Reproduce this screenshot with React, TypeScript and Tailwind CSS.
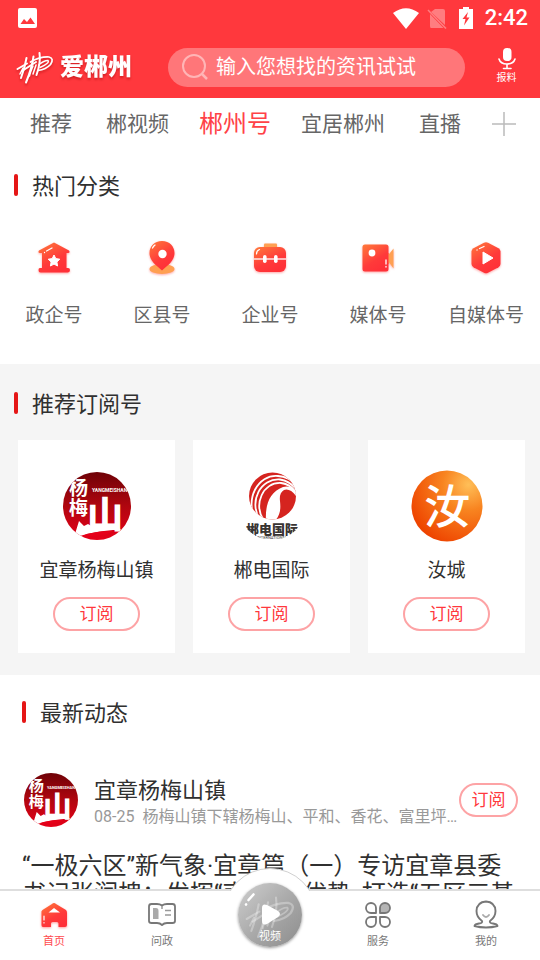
import { useId, useState, type ReactNode } from 'react'

type Tab = { id: string; label: string }

type Category = { label: string; icon: ReactNode }

type Account = { name: string; logo: ReactNode }

type SectionTitleProps = { children: string }

function BrandMark({ className, thin = false }: { className: string; thin?: boolean }) {
  return (
    <svg viewBox="0 0 38 33" className={className} fill="none" stroke="currentColor" strokeWidth={thin ? 1.6 : 2} strokeLinecap="round" aria-hidden="true">
      <path d="M1.5 18 L11 12.500" />
      <path d="M10.500 7 Q9 16 5 27" />
      <path d="M7 17 L4 23" strokeWidth="1.500" />
      <path d="M6 20 L20 11" />
      <path d="M17.500 5.500 Q16 17 10 31.500" />
      <path d="M17 15 Q14 22 13.500 25" strokeWidth="1.500" />
      <path d="M20 14 L17 23" strokeWidth="1.500" />
      <path d="M23.500 2 Q25 11 20.500 24" />
      <path d="M14.500 11 Q24 5.500 33 6 Q38.500 7.500 34.500 13.500 Q30 18.500 22 19.500" strokeWidth="1.700" />
      <path d="M23 13.500 Q29 9 32 9.500 Q34 12 24 16.500" strokeWidth="1.400" />
    </svg>
  )
}

function StatusIcons() {
  return (
    <div className="flex items-center">
      <svg viewBox="0 0 26 21" className="mr-2 h-[21px] w-[26px]" fill="currentColor" aria-hidden="true">
        <path d="M0 5 Q13 -4.500 26 5 L13 21 Z" />
      </svg>
      <svg viewBox="0 0 20 21" className="mr-3 h-[21px] w-5" aria-hidden="true">
        <path d="M8 1 H16 Q18 1 18 3 V17 L4 4 Z M3 6 L16.500 20 H4 Q3 20 3 18 Z" fill="#ff7d80" />
        <path d="M1 2 L19 20.500" stroke="#ff7d80" strokeWidth="1.500" />
      </svg>
      <svg viewBox="0 0 14 22" className="mr-3 h-[22px] w-3.5" aria-hidden="true">
        <path d="M4 0 H10 V2 H14 V22 H0 V2 H4 Z" fill="currentColor" />
        <path d="M9 5 L3.500 12 H6.500 L5 18.500 L10.500 10.500 H7.500 Z" fill="#ff383d" />
      </svg>
      <span className="text-[22px] leading-7 font-medium">2:42</span>
    </div>
  )
}

function WarmGradient({ id }: { id: string }) {
  return (
    <linearGradient id={id} x1="0" y1="0" x2="0.6" y2="1">
      <stop offset="0" stopColor="#ff7a3a" />
      <stop offset="0.65" stopColor="#ff3a3a" />
      <stop offset="1" stopColor="#ff3038" />
    </linearGradient>
  )
}

function CategoryIcon({ children }: { children: (fill: string) => ReactNode }) {
  const id = useId()

  return (
    <svg viewBox="0 0 40 40" className="size-10 drop-shadow-[0_1px_1px_rgba(255,60,60,0.45)]" aria-hidden="true">
      <defs>
        <WarmGradient id={id} />
      </defs>
      {children(`url(#${id})`)}
    </svg>
  )
}

const houseIcon = (
  <CategoryIcon>
    {(fill) => (
      <>
        <path d="M20 4.500 L35 12.500 Q36.500 15 34 15 H32.500 V30 H34 Q36 30 36 32 T34 34.500 H6.500 Q4.500 34.500 4.500 32 T6.500 30 H8 V15 H6 Q3.500 15 5 12.500 Z" fill={fill} />
        <path d="M20 17 L21.800 20.600 L25.800 21.200 L22.900 24 L23.600 28 L20 26.100 L16.400 28 L17.100 24 L14.200 21.200 L18.200 20.600 Z" fill="#fff" stroke="#fff" strokeLinejoin="round" />
        <path d="M12.500 13 L18 10 M10.500 14.500 L10.600 14.400" stroke="#fff" strokeWidth="1.300" strokeLinecap="round" />
      </>
    )}
  </CategoryIcon>
)

const pinIcon = (
  <CategoryIcon>
    {(fill) => (
      <>
        <ellipse cx="20" cy="31" rx="12.500" ry="5" fill="#ffa052" />
        <path d="M20 3 C12.500 3 7.500 8.500 7.500 15 C7.500 23 14 27 20 32.500 C26 27 32.500 23 32.500 15 C32.500 8.500 27.500 3 20 3 Z" fill={fill} />
        <circle cx="20.500" cy="16" r="4.200" fill="#fff" />
        <path d="M10.500 10 Q11.500 8 13 7" stroke="#fff" strokeWidth="1.300" fill="none" strokeLinecap="round" />
      </>
    )}
  </CategoryIcon>
)

const briefcaseIcon = (
  <CategoryIcon>
    {(fill) => (
      <>
        <rect x="14" y="5.500" width="13" height="6" rx="1" fill="#ffa052" />
        <rect x="4" y="9" width="32" height="25" rx="6" fill={fill} />
        <path d="M4 21 H36" stroke="#fff" strokeWidth="1.300" />
        <rect x="13" y="17" width="3.600" height="8" rx="1.800" fill="#fff" />
        <rect x="24" y="17" width="3.600" height="8" rx="1.800" fill="#fff" />
        <path d="M6.500 16 Q6.500 12.500 9.500 11.500" stroke="#fff" strokeWidth="1.200" fill="none" strokeLinecap="round" />
      </>
    )}
  </CategoryIcon>
)

const cameraIcon = (
  <CategoryIcon>
    {(fill) => (
      <>
        <path d="M28 20 L35.500 10.500 V30.500 Z M28 15 H31 V26 H28 Z" fill="#ffa052" />
        <rect x="4.500" y="6.500" width="26" height="27" rx="2.500" fill={fill} />
        <circle cx="14" cy="15" r="3.400" fill="#fff" />
        <path d="M28 22 V26 M28 28.500 V29" stroke="#fff" strokeWidth="1.300" strokeLinecap="round" />
      </>
    )}
  </CategoryIcon>
)

const playIcon = (
  <CategoryIcon>
    {(fill) => (
      <>
        <path d="M18 4.800 Q20 3.800 22 4.800 L32.500 10.300 Q34.500 11.500 34.500 13.500 V26 Q34.500 28 32.500 29.200 L22 34.800 Q20 35.800 18 34.800 L7.500 29.200 Q5.500 28 5.500 26 V13.500 Q5.500 11.500 7.500 10.300 Z" fill={fill} />
        <path d="M17 14 V26 L27 20 Z" fill="#fff" stroke="#fff" strokeWidth="1" strokeLinejoin="round" />
        <path d="M13.500 10.500 L18 8.500 M11 12 L11.100 11.900" stroke="#fff" strokeWidth="1.300" strokeLinecap="round" />
      </>
    )}
  </CategoryIcon>
)

function YangmeiLogo({ className }: { className: string }) {
  const id = useId()

  return (
    <svg viewBox="0 0 68 68" className={className} role="img" aria-label="宜章杨梅山镇">
      <defs>
        <linearGradient id={id} x1="0" y1="0" x2="0" y2="1">
          <stop offset="0" stopColor="#6f0207" />
          <stop offset="0.5" stopColor="#b0060f" />
          <stop offset="1" stopColor="#e60019" />
        </linearGradient>
        <clipPath id={`${id}-clip`}>
          <circle cx="34" cy="34" r="34" />
        </clipPath>
      </defs>
      <g clipPath={`url(#${id}-clip)`}>
        <rect width="68" height="68" fill={`url(#${id})`} />
        <g fill="#fff" fontFamily="'Noto Sans CJK SC', sans-serif" fontWeight="700">
          <text x="6" y="23" fontSize="19">杨</text>
          <text x="6" y="43" fontSize="19">梅</text>
          <text x="24" y="56" fontSize="36" fontWeight="900">山</text>
          <text x="29" y="20" fontSize="5" fontFamily="Roboto, sans-serif">YANGMEISHAN</text>
        </g>
        <path d="M12 62 L16 49 L21 54 L25 52 L30 55 L54 54 L58 58 L50 58 Q36 59 24 62 L17 65 Z" fill="#fff" />
        <path d="M17 64 Q32 59 50 59 Q46 63 32 64 Z" fill="#e60019" />
      </g>
    </svg>
  )
}

function ChendianLogo() {
  const id = useId()

  return (
    <svg viewBox="0 0 68 68" className="size-[68px]" role="img" aria-label="郴电国际">
      <defs>
        <clipPath id={id}>
          <circle cx="34" cy="34" r="34" />
        </clipPath>
        <clipPath id={`${id}-ball`}>
          <circle cx="34.500" cy="24" r="23.500" />
        </clipPath>
      </defs>
      <g clipPath={`url(#${id}-ball)`}>
        <rect width="68" height="52" fill="#d5241f" />
        <g fill="none" stroke="#fff" strokeWidth="1.800">
          <path d="M18 48 C6 28 20 2 40 4 Q52 5 60 14" />
          <path d="M22 48 C10 29 23 6 42 7.500 Q52 9 60 19" />
          <path d="M26 49 C15 32 25 10 43 11 Q53 12 60 23" />
        </g>
        <path d="M28 49 C27 34 31 20 45 15 Q53 13 58 20 L58 24 Q52 16 46 18 Q41 21 42 29 C43 38 42 43 37 49 Z" fill="#fff" />
        <path d="M60 40 Q52 48 37 47 L37 50 H60 Z" fill="#fff" />
      </g>
      <g clipPath={`url(#${id})`} fill="#383432">
        <text x="34" y="62" fontSize="13" fontWeight="900" textAnchor="middle" fontFamily="'Noto Sans CJK SC', sans-serif">郴电国际</text>
        <text x="34" y="67" fontSize="4" textAnchor="middle" fontFamily="Roboto, sans-serif">INTERNATIONAL</text>
      </g>
    </svg>
  )
}

function RuchengLogo() {
  const id = useId()

  return (
    <svg viewBox="0 0 72 72" className="size-[72px]" role="img" aria-label="汝城">
      <defs>
        <radialGradient id={id} cx="0.8" cy="0.2" r="0.9">
          <stop offset="0" stopColor="#ffbf58" />
          <stop offset="0.4" stopColor="#f88420" />
          <stop offset="1" stopColor="#ee4400" />
        </radialGradient>
      </defs>
      <circle cx="36" cy="36" r="35.500" fill={`url(#${id})`} />
      <text x="36" y="53" fontSize="46" fontWeight="500" textAnchor="middle" fill="#fff" fontFamily="'Noto Sans CJK SC', sans-serif">汝</text>
    </svg>
  )
}

function HomeIcon() {
  const id = useId()

  return (
    <svg viewBox="0 0 32 32" className="size-8 drop-shadow-[0_1px_1px_rgba(255,60,60,0.5)]" aria-hidden="true">
      <defs>
        <WarmGradient id={id} />
      </defs>
      <path d="M16 4 Q17 4 18 5 L28 11 Q29 12 29 14 V26 Q29 28 27 28 H20.500 V24.500 Q20.500 23 19 23 H14.500 Q13 23 13 24.500 V28 H5 Q3.500 28 3.500 26 V14 Q3 12 4.500 11 L14 5 Q15 4 16 4 Z" fill={`url(#${id})`} />
      <path d="M16 9 L22 13.500 H10.500 Z" fill="#fff" />
      <path d="M6 17 V21 M6 23.500 V24" stroke="#fff" strokeWidth="1.200" strokeLinecap="round" />
    </svg>
  )
}

function BookIcon() {
  return (
    <svg viewBox="0 0 32 32" className="size-8" fill="none" stroke="#777" strokeWidth="1.800" strokeLinejoin="round" aria-hidden="true">
      <path d="M16 6.500 Q14 5 11 5 H5.500 Q3 5 3 7.500 V22 Q3 24 5.500 24 H11 Q14 24 16 26 Q18 24 21 24 H26.500 Q29 24 29 22 V7.500 Q29 5 26.500 5 H21 Q18 5 16 6.500 Z" />
      <path d="M7 9 H10 Q12.500 9 12.500 12 V20 H7 Z" fill="#aaa" stroke="none" />
      <path d="M16 7 V10 M19 11.500 H25 M19 16 H25" stroke="#999" strokeWidth="1.500" />
    </svg>
  )
}

function CloverIcon() {
  return (
    <svg viewBox="0 0 32 32" className="size-8" fill="none" stroke="#777" strokeWidth="1.800" strokeLinejoin="round" aria-hidden="true">
      <path d="M14 14 H9 A5 5 0 1 1 14 9 Z" />
      <path d="M18 14 V9 A5 5 0 1 1 23 14 Z" fill="#b5b5b5" />
      <path d="M14 18 V23 A5 5 0 1 1 9 18 Z" />
      <path d="M18 18 H23 A5 5 0 1 1 18 23 Z" />
    </svg>
  )
}

function PersonIcon() {
  return (
    <svg viewBox="0 0 32 32" className="size-8" fill="none" stroke="#777" strokeWidth="1.900" strokeLinejoin="round" strokeLinecap="round" aria-hidden="true">
      <path d="M12 22 Q6.500 18 6.500 12 Q7 3 16 2.500 Q25 3 25.500 12 Q25.500 18 20 22 Q19 24 23 24.500 Q27 25 27.500 27 Q22 28.500 16 28.500 Q10 28.500 4.500 27 Q5 25 9 24.500 Q13 24 12 22 Z" />
      <path d="M13 16 Q16 20 19 16" stroke="#aaa" />
    </svg>
  )
}

function SectionTitle({ children }: SectionTitleProps) {
  return (
    <h2 className="flex items-start text-[22px] leading-8 text-[#303030]">
      <span className="mt-[3px] mr-3.5 h-[22px] w-1 rounded-sm bg-[#e51616]" />
      {children}
    </h2>
  )
}

function SubscribeButton({ name, className }: { name: string; className: string }) {
  const [subscribed, setSubscribed] = useState(false)

  return (
    <button
      type="button"
      aria-label={`订阅${name}`}
      aria-pressed={subscribed}
      className={`flex h-[34px] shrink-0 items-center justify-center rounded-full border-2 border-[#fda3a5] bg-white text-[17px] leading-6 text-[#ff383d] ${className}`}
      onClick={() => setSubscribed(!subscribed)}
    >
      {subscribed ? '已订阅' : '订阅'}
    </button>
  )
}

const tabs: Tab[] = [
  { id: 'recommend', label: '推荐' },
  { id: 'video', label: '郴视频' },
  { id: 'accounts', label: '郴州号' },
  { id: 'living', label: '宜居郴州' },
  { id: 'live', label: '直播' },
]

const categories: Category[] = [
  { label: '政企号', icon: houseIcon },
  { label: '区县号', icon: pinIcon },
  { label: '企业号', icon: briefcaseIcon },
  { label: '媒体号', icon: cameraIcon },
  { label: '自媒体号', icon: playIcon },
]

const accounts: Account[] = [
  { name: '宜章杨梅山镇', logo: <YangmeiLogo className="size-[68px]" /> },
  { name: '郴电国际', logo: <ChendianLogo /> },
  { name: '汝城', logo: <RuchengLogo /> },
]

function Header() {
  return (
    <header className="shrink-0 bg-[#ff383d] text-white">
      <div className="flex h-9 items-center justify-between pr-3 pl-[18px]">
        <svg viewBox="0 0 19 20" className="h-5 w-[19px]" aria-hidden="true">
          <rect width="19" height="20" rx="2" fill="currentColor" />
          <path d="M2.500 16 L6 11 L9 14 L12.500 9.500 L17 16 Z" fill="#ff383d" />
        </svg>
        <StatusIcons />
      </div>
      <div className="flex h-[62px] items-center pl-4">
        <h1 className="flex w-[152px] shrink-0 items-center gap-1.5 text-2xl font-black drop-shadow-[0_2px_1px_rgba(150,0,0,0.4)]">
          <BrandMark className="h-[33px] w-[38px]" />
          爱郴州
        </h1>
        <label className="mr-2 flex h-[39px] min-w-0 flex-1 items-center gap-2 rounded-full bg-[#ff7679] pl-3.5">
          <svg viewBox="0 0 26 26" className="size-[26px] shrink-0" fill="none" stroke="#ffb5b6" strokeWidth="2" aria-hidden="true">
            <circle cx="12" cy="12" r="11" />
            <path d="M20 20 L25 25" strokeWidth="2.500" />
          </svg>
          <input
            type="search"
            aria-label="搜索"
            placeholder="输入您想找的资讯试试"
            className="w-full min-w-0 bg-transparent text-xl leading-7 text-white outline-none placeholder:text-white"
          />
        </label>
        <button type="button" className="flex w-[67px] shrink-0 flex-col items-center text-[10px] leading-4">
          <svg viewBox="0 0 18 22" className="h-[22px] w-[18px]" fill="none" stroke="currentColor" strokeWidth="1.600" strokeLinecap="round" aria-hidden="true">
            <rect x="5" y="0" width="8.500" height="13" rx="4" fill="currentColor" stroke="none" />
            <path d="M1 11 Q2.500 16 9 16 Q15.500 16 17 11 M9 16 V20 M5.500 20.500 H13" />
          </svg>
          报料
        </button>
      </div>
    </header>
  )
}

function ChannelTabs() {
  const [active, setActive] = useState('accounts')

  return (
    <nav className="flex h-[50px] shrink-0 items-center gap-[34px] pt-px pr-6 pl-[30px]" aria-label="频道">
      {tabs.map((tab) => (
        <button
          key={tab.id}
          type="button"
          className={tab.id === active ? '-mx-1 shrink-0 text-2xl text-[#ff4247]' : 'shrink-0 text-[21px] leading-8 text-[#666]'}
          onClick={() => setActive(tab.id)}
        >
          {tab.label}
        </button>
      ))}
      <button type="button" aria-label="更多频道" className="-ml-2 flex flex-1 justify-end">
        <svg viewBox="0 0 24 24" className="size-6 shrink-0" stroke="#bbb" strokeWidth="1.500" aria-hidden="true">
          <path d="M12 0 V24 M0 12 H24" />
        </svg>
      </button>
    </nav>
  )
}

function BottomNav() {
  return (
    <nav className="relative grid h-[71px] shrink-0 grid-cols-5 border-t-2 border-[#dedede] bg-white text-[11px] leading-4 text-[#777]" aria-label="主导航">
      {/* raised bump behind the video button */}
      <span className="absolute -top-[23px] left-1/2 h-[94px] w-[94px] -translate-x-1/2 rounded-full border border-[#d0d0d0] bg-white" />
      <span className="absolute inset-x-0 top-0 h-full bg-white" />
      <a href="#home" className="relative flex flex-col items-center pt-2 text-[#ff4b4f]">
        <HomeIcon />
        <span className="mt-[3px]">首页</span>
      </a>
      <a href="#politics" className="relative flex flex-col items-center pt-2">
        <BookIcon />
        <span className="mt-[3px]">问政</span>
      </a>
      <a href="#video" className="relative flex justify-center text-white">
        <span className="absolute -top-2 flex size-16 flex-col items-center justify-end rounded-full bg-linear-to-br from-[#cfcfcf] via-[#aaa] to-[#8c8c8c] pb-0.5 shadow-[0_1px_3px_rgba(0,0,0,0.4)]">
          <BrandMark thin className="absolute top-3 left-1.5 h-[44px] w-[52px] text-white/30" />
          <svg viewBox="0 0 64 64" className="absolute inset-0 size-16" fill="#fff" aria-hidden="true">
            <path d="M24 25 Q24 20 29 22 L40 28 Q44 31 40 34 L29 41 Q24 43 24 38 Z" />
            <path d="M10.500 17 L15.500 11.500 M8 21.500 L8.100 21.400" stroke="#fff" strokeWidth="2.600" strokeLinecap="round" />
          </svg>
          <span className="relative">视频</span>
        </span>
      </a>
      <a href="#service" className="relative flex flex-col items-center pt-2">
        <CloverIcon />
        <span className="mt-[3px]">服务</span>
      </a>
      <a href="#mine" className="relative flex flex-col items-center pt-2">
        <PersonIcon />
        <span className="mt-[3px]">我的</span>
      </a>
    </nav>
  )
}

export default function App() {
  return (
    <div className="flex h-dvh flex-col overflow-hidden bg-white font-[Roboto,'Noto_Sans_CJK_SC',sans-serif]" lang="zh-CN">
      <Header />
      <ChannelTabs />
      <main className="min-h-0 flex-1 overflow-y-auto [scrollbar-width:none]">
        <section className="pt-[23px] pb-[34px]">
          <div className="pl-3.5">
            <SectionTitle>热门分类</SectionTitle>
          </div>
          <div className="mt-[35px] grid grid-cols-5">
            {categories.map((category) => (
              <a key={category.label} href="#category" className="flex flex-col items-center text-[19px] leading-7 text-[#666]">
                {category.icon}
                <span className="mt-6 whitespace-nowrap">{category.label}</span>
              </a>
            ))}
          </div>
        </section>

        <section className="bg-[#f5f5f5] pt-[25px] pb-[22px]">
          <div className="pl-3.5">
            <SectionTitle>推荐订阅号</SectionTitle>
          </div>
          <div className="mt-[19px] grid grid-cols-3 gap-[18px] pr-[15px] pl-[18px]">
            {accounts.map((account) => (
              <article key={account.name} className="flex flex-col items-center bg-white pt-[30px] pb-[22px]">
                <div className="flex size-[72px] items-center justify-center">{account.logo}</div>
                <h3 className="mt-[15px] mb-3 text-[19px] leading-7 whitespace-nowrap text-[#303030]">{account.name}</h3>
                <SubscribeButton name={account.name} className="w-[87px]" />
              </article>
            ))}
          </div>
        </section>

        <section className="px-[22px] pt-[23px] pb-6">
          <SectionTitle>最新动态</SectionTitle>
          <article className="mt-[43px]">
            <div className="flex items-center">
              <YangmeiLogo className="mr-4 ml-0.5 size-[54px] shrink-0" />
              <div className="min-w-0 flex-1 pt-px">
                <h3 className="text-[22px] leading-8 text-[#303030]">宜章杨梅山镇</h3>
                <p className="truncate text-base leading-5 text-[#999]">
                  <time className="mr-2">08-25</time>
                  杨梅山镇下辖杨梅山、平和、香花、富里坪、月梅等村
                </p>
              </div>
              <SubscribeButton name="宜章杨梅山镇" className="w-[59px]" />
            </div>
            <p className="mt-[25px] text-2xl leading-7 text-[#303030]">
              “一极六区”新气象·宜章篇（一）专访宜章县委书记张润槐：发挥“南大门”优势, 打造“五区三基地”
            </p>
          </article>
        </section>
      </main>
      <BottomNav />
    </div>
  )
}
